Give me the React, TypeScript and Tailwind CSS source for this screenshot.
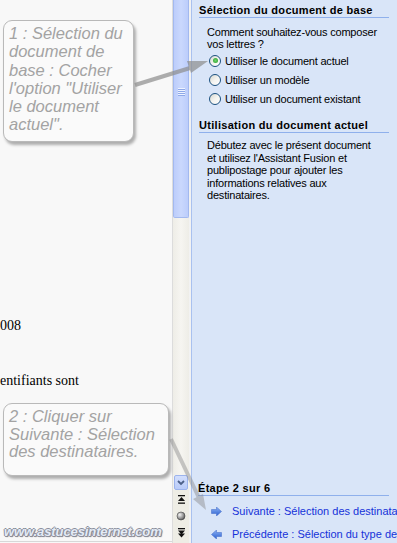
import React from "react";

const ui = { fontFamily: '"Liberation Sans", Arial, sans-serif' };
const serif = { fontFamily: '"Liberation Serif", "Times New Roman", serif' };

function Radio({ checked }: { checked?: boolean }) {
  return (
    <span className="w-[12px] h-[12px] rounded-full border border-[#1c5180] bg-linear-to-br from-[#d6d6ce] via-[#f4f4f0] to-white flex items-center justify-center shrink-0">
      {checked && (
        <span className="w-[5px] h-[5px] rounded-full bg-radial from-[#6fd66f] to-[#1f9a1f]" />
      )}
    </span>
  );
}

function RadioRow({ label, checked }: { label: string; checked?: boolean }) {
  return (
    <div className="h-[19px] flex items-center pl-[2px] gap-[4px]">
      <Radio checked={checked} />
      <span className="tracking-[-0.2px]">{label}</span>
    </div>
  );
}

function LinkArrow({ left }: { left?: boolean }) {
  return (
    <svg width="11" height="9" viewBox="0 0 11 9" className="shrink-0" style={left ? { transform: "scaleX(-1)" } : undefined}>
      <defs>
        <linearGradient id={left ? "la" : "ra"} x1="0" y1="0" x2="0" y2="1">
          <stop offset="0" stopColor="#8fb4f4" />
          <stop offset="1" stopColor="#2a5fd0" />
        </linearGradient>
      </defs>
      <polygon points="0.5,2.5 5.5,2.5 5.5,0 10.5,4.5 5.5,9 5.5,6.5 0.5,6.5" fill={`url(#${left ? "la" : "ra"})`} stroke="#3c66c6" strokeWidth="0.5" />
    </svg>
  );
}

export default function App() {
  return (
    <div className="relative w-[397px] h-[543px] overflow-hidden flex bg-[#f8f8f8]" style={ui}>
      {/* Document area */}
      <div className="relative w-[173px] h-full bg-[#f8f8f8] border-r border-[#dcdcdc] shrink-0 overflow-hidden">
        <div className="pt-[318px] text-[14px] leading-[16px] text-black whitespace-nowrap" style={serif}>
          <div>008</div>
          <div className="mt-[39px]">entifiants sont</div>
        </div>
        <div
          className="absolute left-[4px] top-[523px] text-[13px] font-bold italic leading-[18px] text-[#e4ebf6] whitespace-nowrap tracking-[-0.1px]"
          style={{
            textShadow:
              "1px 0 0 #8a8e9c, -1px 0 0 #8a8e9c, 0 1px 0 #8a8e9c, 0 -1px 0 #8a8e9c, 1px 1px 1px #6f7382",
          }}
        >
          www.astucesinternet.com
        </div>
        <div className="absolute left-0 right-0 bottom-[1px] h-px bg-[#d8d8d8]" />
      </div>

      {/* Scrollbar */}
      <div className="w-[16px] h-full flex flex-col shrink-0 bg-[#f3f2ed]">
        <div className="h-[218px] bg-linear-to-r from-[#bccdfb] via-[#cad8fd] to-[#bccdfb] border-x border-b border-[#a3b9ef] rounded-b-[2px] flex flex-col items-center pt-[88px] gap-[1px]">
          <div className="w-[7px] h-[1px] bg-[#eef3ff] shadow-[0_1px_0_#8ea8e8]" />
          <div className="w-[7px] h-[1px] bg-[#eef3ff] shadow-[0_1px_0_#8ea8e8]" />
          <div className="w-[7px] h-[1px] bg-[#eef3ff] shadow-[0_1px_0_#8ea8e8]" />
          <div className="w-[7px] h-[1px] bg-[#eef3ff] shadow-[0_1px_0_#8ea8e8]" />
        </div>
        <div className="flex-1 bg-linear-to-r from-[#eeede7] via-[#f6f5f1] to-[#eeede7]" />
        <div className="h-[15px] mx-[1px] bg-linear-to-b from-[#d2defd] to-[#b9cbf8] border border-[#9cb3ec] rounded-[2px] flex items-center justify-center">
          <svg width="8" height="6" viewBox="0 0 8 6">
            <polyline points="1,1 4,4 7,1" fill="none" stroke="#4d6088" strokeWidth="1.8" />
          </svg>
        </div>
        <div className="h-[53px] bg-[#eeede5] flex flex-col items-center pt-[4px] gap-[6px]">
          <svg width="9" height="11" viewBox="0 0 9 11">
            <rect x="1" y="1" width="7" height="1.3" fill="#111" />
            <polygon points="4.5,3 8,7 1,7" fill="#111" />
            <rect x="1" y="8.5" width="7" height="1.3" fill="#111" />
          </svg>
          <svg width="10" height="10" viewBox="0 0 10 10">
            <defs>
              <radialGradient id="sph" cx="0.35" cy="0.35" r="0.7">
                <stop offset="0" stopColor="#f4f4f4" />
                <stop offset="0.6" stopColor="#9a9a9a" />
                <stop offset="1" stopColor="#555" />
              </radialGradient>
            </defs>
            <circle cx="5" cy="5" r="4" fill="url(#sph)" stroke="#444" strokeWidth="0.6" />
          </svg>
          <svg width="9" height="11" viewBox="0 0 9 11">
            <rect x="1" y="1" width="7" height="1.3" fill="#111" />
            <polygon points="1,3.5 8,3.5 4.5,7.5" fill="#111" />
            <polygon points="1,6.5 8,6.5 4.5,10.5" fill="#111" />
          </svg>
        </div>
      </div>

      {/* Separator */}
      <div className="w-[2px] h-full bg-[#f2f2f2] shrink-0" />

      {/* Task pane */}
      <div className="flex-1 h-full bg-[#d9e5f8] border-l border-[#a9c1ef] flex flex-col text-[11px] text-black overflow-hidden">
        <div className="pt-[4px] pl-[7px] pr-[8px]">
          <div className="font-bold leading-[13px] border-b border-[#8fb0ec] tracking-[0.3px] whitespace-nowrap">
            Sélection du document de base
          </div>
          <div className="pl-[8px] pt-[8px] leading-[12px]">
            <div className="tracking-[-0.2px] whitespace-nowrap">Comment souhaitez-vous composer</div>
            <div className="tracking-[-0.2px]">vos lettres ?</div>
            <div className="mt-[1px]">
              <RadioRow label="Utiliser le document actuel" checked />
              <RadioRow label="Utiliser un modèle" />
              <RadioRow label="Utiliser un document existant" />
            </div>
          </div>
          <div className="mt-[11px] font-bold leading-[13px] border-b border-[#8fb0ec] tracking-[0.3px] whitespace-nowrap">
            Utilisation du document actuel
          </div>
          <div className="pl-[8px] pt-[6px] leading-[12.6px] tracking-[-0.2px]">
            <div>Débutez avec le présent document</div>
            <div>et utilisez l'Assistant Fusion et</div>
            <div>publipostage pour ajouter les</div>
            <div>informations relatives aux</div>
            <div>destinataires.</div>
          </div>
        </div>

        <div className="mt-auto mb-[-3px] pl-[6px] pr-[8px]">
          <div className="font-bold leading-[13px] border-b border-[#8fb0ec] tracking-[0.3px] whitespace-nowrap">
            Étape 2 sur 6
          </div>
          <div className="pt-[4px]">
            <div className="h-[23px] flex items-center gap-[10px] pl-[13px] whitespace-nowrap text-[#1532d8]">
              <LinkArrow />
              <span>Suivante : Sélection des destinata</span>
            </div>
            <div className="h-[23px] flex items-center gap-[10px] pl-[13px] whitespace-nowrap text-[#1532d8]">
              <LinkArrow left />
              <span>Précédente : Sélection du type de</span>
            </div>
          </div>
        </div>
      </div>

      {/* Callout 1 */}
      <div className="absolute left-[3px] top-[20px] w-[131px] h-[122px] rounded-[9px] border border-[#b9b9b9] bg-[#fafafa] shadow-[2px_3px_3px_rgba(0,0,0,0.3)] pl-[5px] pt-[3px] text-[16.5px] leading-[18.3px] italic text-[#a3a3a3] whitespace-nowrap">
        1 : Sélection du
        <br />
        document de
        <br />
        base : Cocher
        <br />
        l'option "Utiliser
        <br />
        le document
        <br />
        actuel".
      </div>

      {/* Callout 2 */}
      <div className="absolute left-[3px] top-[403px] w-[166px] h-[73px] rounded-[9px] border border-[#b9b9b9] bg-[#fafafa] shadow-[2px_3px_3px_rgba(0,0,0,0.3)] pl-[5px] pt-[4px] text-[16.5px] leading-[17.6px] italic text-[#a3a3a3] whitespace-nowrap">
        2 : Cliquer sur
        <br />
        Suivante : Sélection
        <br />
        des destinataires.
      </div>

      {/* Pointer arrows */}
      <svg className="absolute inset-0 pointer-events-none" width="397" height="543" viewBox="0 0 397 543">
        <g opacity="0.7">
          <line x1="135" y1="85" x2="190" y2="68" stroke="#8d8d8d" strokeWidth="4" />
          <polygon points="208,61 187,61 191,73" fill="#8d8d8d" />
        </g>
        <g opacity="0.45">
          <line x1="171" y1="439" x2="200" y2="500" stroke="#8a8a8a" strokeWidth="4" />
          <polygon points="206,510 193,499 203,494" fill="#8a8a8a" />
        </g>
      </svg>
    </div>
  );
}
